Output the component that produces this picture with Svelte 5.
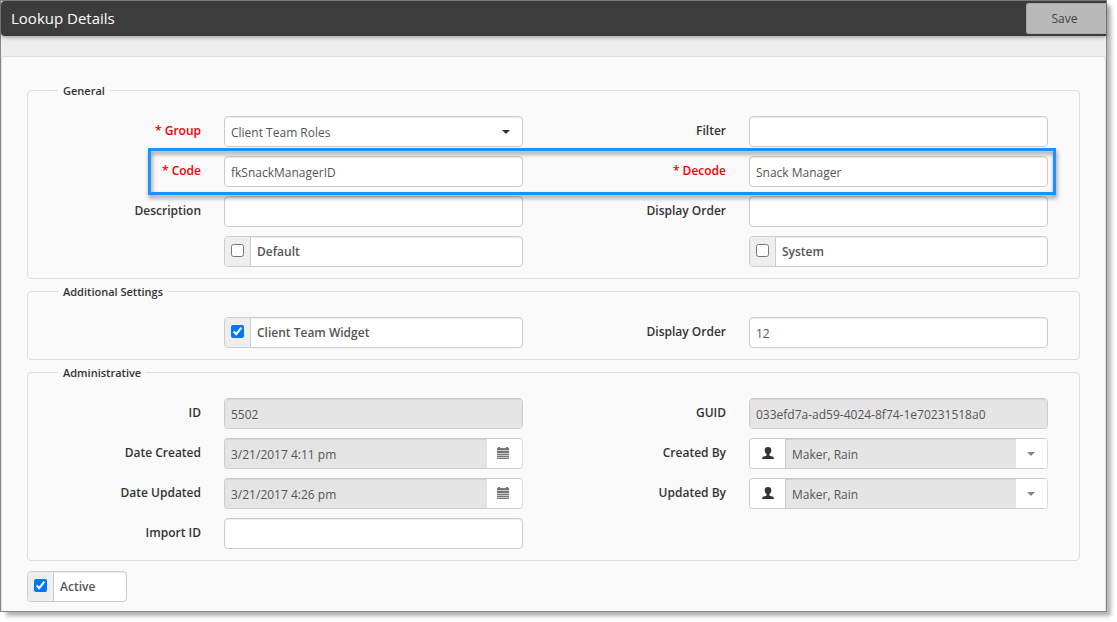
<script lang="ts">
    let group = $state("Client Team Roles")
    let filter = $state("")
    let code = $state("fkSnackManagerID")
    let decode = $state("Snack Manager")
    let description = $state("")
    let displayOrder = $state("")
    let isDefault = $state(false)
    let isSystem = $state(false)

    let teamWidget = $state(true)
    let widgetOrder = $state("12")

    let importId = $state("")
    let active = $state(true)

    const record = {
        id: "5502",
        guid: "033efd7a-ad59-4024-8f74-1e70231518a0",
        created: "3/21/2017 4:11 pm",
        createdBy: "Maker, Rain",
        updated: "3/21/2017 4:26 pm",
        updatedBy: "Maker, Rain",
    }
</script>

{#snippet caret()}
    <svg class="caret" width="8" height="4" viewBox="0 0 8 4" aria-hidden="true">
        <path d="M0 0h8L4 4z" fill="currentColor" />
    </svg>
{/snippet}

{#snippet dateField(id: string, label: string, value: string)}
    <div class="field">
        <label for={id}>{label}</label>
        <div class="control">
            <input {id} type="text" {value} readonly />
            <button type="button" class="pick" aria-label="Pick date" disabled>
                <svg width="12" height="12" viewBox="0 0 12 12" aria-hidden="true">
                    <path
                        fill="currentColor"
                        d="M1 0h2v1h6V0h2v1h1v2H0V1h1zM0 4h12v2H0zM0 7h12v1H0zM0 9h12v1H0zM0 11h12v1H0z"
                    />
                    <path
                        fill="currentColor"
                        opacity=".4"
                        d="M0 3h12v1H0zM0 6h12v1H0zM0 8h12v1H0zM0 10h12v1H0z"
                    />
                </svg>
            </button>
        </div>
    </div>
{/snippet}

{#snippet userField(id: string, label: string, value: string)}
    <div class="field">
        <label for={id}>{label}</label>
        <div class="control">
            <button type="button" class="person" aria-label="View user">
                <svg width="12" height="12" viewBox="0 0 12 12" aria-hidden="true">
                    <path
                        fill="currentColor"
                        d="M6 0C3.900 0 2.700 1.200 2.700 3c0 1.800.7 3.200 1.800 4.100v1.300C4.200 9 1 9.400.3 10.400L0 12h12l-.3-1.600C11 9.400 7.800 9 7.500 8.400V7.100C8.600 6.200 9.300 4.800 9.300 3c0-1.800-1.200-3-3.300-3z"
                    />
                </svg>
            </button>
            <input {id} type="text" {value} readonly />
            <button type="button" class="drop" aria-label="Choose user" disabled>
                {@render caret()}
            </button>
        </div>
    </div>
{/snippet}

<div class="window">
    <header>
        <h1>Lookup Details</h1>
        <button type="button" class="save">Save</button>
    </header>

    <form class="panel">
        <fieldset>
            <legend>General</legend>
            <div class="row">
                <div class="field required">
                    <label for="group">* Group</label>
                    <div class="control">
                        <select id="group" bind:value={group}>
                            <option>Client Team Roles</option>
                        </select>
                        <span class="arrow">{@render caret()}</span>
                    </div>
                </div>
                <div class="field">
                    <label for="filter">Filter</label>
                    <div class="control">
                        <input id="filter" type="text" bind:value={filter} />
                    </div>
                </div>
            </div>
            <div class="row highlight">
                <div class="field required">
                    <label for="code">* Code</label>
                    <div class="control">
                        <input id="code" type="text" bind:value={code} />
                    </div>
                </div>
                <div class="field required">
                    <label for="decode">* Decode</label>
                    <div class="control">
                        <input id="decode" type="text" bind:value={decode} />
                    </div>
                </div>
            </div>
            <div class="row">
                <div class="field">
                    <label for="description">Description</label>
                    <div class="control">
                        <input id="description" type="text" bind:value={description} />
                    </div>
                </div>
                <div class="field">
                    <label for="order">Display Order</label>
                    <div class="control">
                        <input id="order" type="text" bind:value={displayOrder} />
                    </div>
                </div>
            </div>
            <div class="row">
                <div class="field">
                    <label class="control check">
                        <span class="box"><input type="checkbox" bind:checked={isDefault} /></span>
                        <span class="name">Default</span>
                    </label>
                </div>
                <div class="field">
                    <label class="control check">
                        <span class="box"><input type="checkbox" bind:checked={isSystem} /></span>
                        <span class="name">System</span>
                    </label>
                </div>
            </div>
        </fieldset>

        <fieldset>
            <legend>Additional Settings</legend>
            <div class="row">
                <div class="field">
                    <label class="control check">
                        <span class="box"><input type="checkbox" bind:checked={teamWidget} /></span>
                        <span class="name">Client Team Widget</span>
                    </label>
                </div>
                <div class="field">
                    <label for="widget-order">Display Order</label>
                    <div class="control">
                        <input id="widget-order" type="text" bind:value={widgetOrder} />
                    </div>
                </div>
            </div>
        </fieldset>

        <fieldset>
            <legend>Administrative</legend>
            <div class="row">
                <div class="field">
                    <label for="id">ID</label>
                    <div class="control">
                        <input id="id" type="text" value={record.id} readonly />
                    </div>
                </div>
                <div class="field">
                    <label for="guid">GUID</label>
                    <div class="control">
                        <input id="guid" type="text" value={record.guid} readonly />
                    </div>
                </div>
            </div>
            <div class="row">
                {@render dateField("created", "Date Created", record.created)}
                {@render userField("created-by", "Created By", record.createdBy)}
            </div>
            <div class="row">
                {@render dateField("updated", "Date Updated", record.updated)}
                {@render userField("updated-by", "Updated By", record.updatedBy)}
            </div>
            <div class="row">
                <div class="field">
                    <label for="import-id">Import ID</label>
                    <div class="control">
                        <input id="import-id" type="text" bind:value={importId} />
                    </div>
                </div>
            </div>
        </fieldset>

        <label class="control check active">
            <span class="box"><input type="checkbox" bind:checked={active} /></span>
            <span class="name">Active</span>
        </label>
    </form>
</div>

<style>
    :global(body) {
        background: #fff;
    }

    .window,
    .window * {
        box-sizing: border-box;
    }

    .window {
        margin: 0 10px 10px 0;
        border: 1px solid #888;
        background: #eee;
        box-shadow: 5px 5px 4px -1px rgba(0, 0, 0, 0.3);
        color: #333;
        font: 12px/18px "Open Sans", "Noto Sans", sans-serif;
    }

    header {
        display: flex;
        align-items: center;
        justify-content: space-between;
        height: 35px;
        padding-left: 10px;
        border-radius: 4px 0 0 4px;
        background: #3c3c3c;
        box-shadow: 0 1px 4px rgba(0, 0, 0, 0.4);
    }

    h1 {
        margin: 0;
        padding-bottom: 2px;
        color: #fff;
        font-size: 15px;
        font-weight: 400;
        line-height: 20px;
    }

    button,
    input,
    select {
        margin: 0;
        font: inherit;
    }

    .save {
        width: 80px;
        height: 31px;
        padding: 0 10px 0 6px;
        border: 1px solid #aaa;
        border-right: 0;
        border-radius: 3px 0 0 3px;
        background: #b9b9b9;
        color: #444;
    }

    .panel {
        margin-top: 20px;
        padding: 25px 25px 9px;
        border: 1px solid #ddd;
        border-bottom: 0;
        border-radius: 4px 4px 0 0;
        background: #fafafa;
    }

    fieldset {
        display: block;
        min-width: 0;
        margin: 0 0 4px;
        padding: 17px 1px 11px 0;
        border: 1px solid #ddd;
        border-radius: 4px;
    }

    legend {
        margin-left: 30px;
        padding: 0 5px;
        font-size: 11px;
        font-weight: 600;
        line-height: 17px;
    }

    .row {
        display: grid;
        grid-template-columns: 1fr 1fr;
    }

    .row + .row {
        margin-top: 9px;
    }

    .field {
        display: flex;
        align-items: center;
        padding-right: 30px;
    }

    .field > label:not(.control) {
        width: 196px;
        padding: 0 23px 2px 0;
        font-weight: 600;
        text-align: right;
    }

    .required > label:not(.control) {
        color: #f00000;
    }

    .control {
        position: relative;
        display: flex;
        flex: 1;
        min-width: 0;
        height: 31px;
        overflow: hidden;
        border: 1px solid #ccc;
        border-radius: 4px;
        background: #fff;
        box-shadow: inset 0 1px 1px rgba(0, 0, 0, 0.08);
        color: #555;
    }

    .control:has(.pick),
    .control:has(.drop) {
        border-right-color: #ddd;
    }

    .control input[type="text"],
    select {
        flex: 1;
        min-width: 0;
        padding: 2px 6px 0;
        border: 0;
        background: transparent;
        color: inherit;
        appearance: none;
    }

    .control input[readonly] {
        background: #e5e5e5;
        box-shadow: inset 0 1px 1px rgba(0, 0, 0, 0.08);
    }

    .arrow {
        position: absolute;
        top: 0;
        right: 12px;
        display: flex;
        align-items: center;
        height: 100%;
        color: #333;
        pointer-events: none;
    }

    .caret {
        display: block;
    }

    .control button {
        display: flex;
        align-items: center;
        justify-content: center;
        padding: 0;
        border: 0;
        background: #fff;
    }

    .control .pick {
        width: 35px;
        padding: 0 4px 2px 0;
        color: #777;
    }

    .control .drop {
        width: 31px;
        padding-right: 2px;
        color: #888;
    }

    .control .person {
        width: 36px;
        padding-bottom: 2px;
        border-right: 1px solid #ccc;
        color: #333;
    }

    .check {
        font-weight: 600;
    }

    .field > .check {
        margin-left: 196px;
    }

    .box {
        display: flex;
        align-items: center;
        justify-content: center;
        width: 26px;
        padding-bottom: 2px;
        border-right: 1px solid #ccc;
        background: #eee;
    }

    .box input {
        width: 13px;
        height: 13px;
    }

    .name {
        padding: 6px 6px 0;
    }

    .active {
        width: 100px;
        margin-top: 10px;
    }

    /* outlined row, drawn over the fields next to it */
    .highlight {
        position: relative;
    }

    .highlight::after {
        content: "";
        position: absolute;
        z-index: 1;
        top: -8px;
        right: 22px;
        bottom: -8px;
        left: 120px;
        border: 3px solid #1e90ff;
        filter: drop-shadow(1px 3px 2px rgba(0, 0, 0, 0.45));
        pointer-events: none;
    }
</style>
